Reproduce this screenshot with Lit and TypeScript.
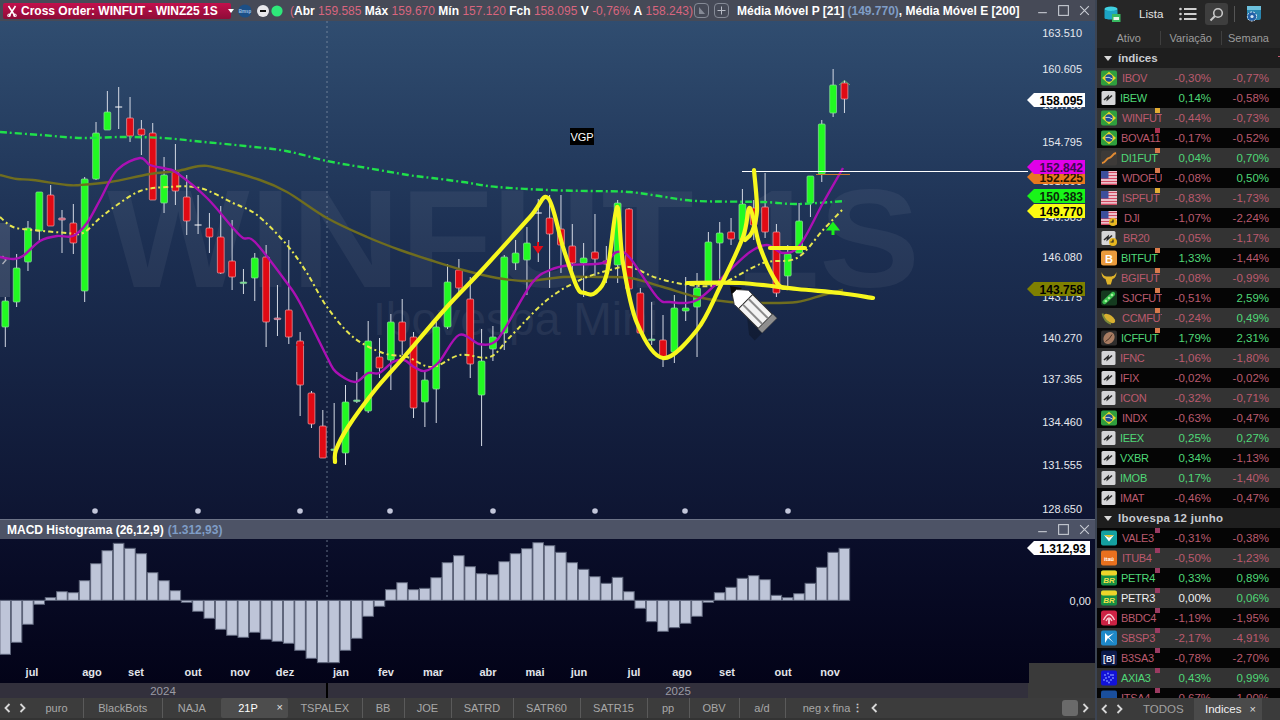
import { LitElement, html, css, svg } from "lit";
import { customElement } from "lit/decorators.js";

type P = [number, number];
const cx = (i: number) => 5.3 + 11.34 * i;

// wickTop, wickBottom, bodyTop, bodyBottom, colour
const candles: [number, number, number, number, string][] = [
  [297,347,301,327,"g"],[254,307,268,302,"g"],[221,271,228,262,"g"],[192,242,192,231,"g"],[185,226,195,226,"r"],
  [210,253,218,220,"p"],[204,254,223,243,"r"],[177,302,179,291,"g"],[122,180,133,179,"g"],[91,130,112,130,"g"],
  [87,129,107,107,"w"],[97,142,118,136,"r"],[120,155,129,135,"r"],[123,200,133,200,"r"],[157,213,175,203,"g"],
  [144,205,172,191,"r"],[175,235,197,221,"r"],[195,234,225,225,"w"],[213,253,228,237,"r"],[206,274,237,273,"r"],
  [220,290,261,277,"r"],[269,294,282,283,"d"],[253,301,258,278,"g"],[245,347,257,322,"r"],[285,336,318,319,"p"],
  [240,344,310,337,"r"],[332,416,341,385,"r"],[391,428,393,424,"r"],[410,458,426,458,"r"],[403,463,449,450,"d"],
  [385,465,402,453,"g"],[372,403,400,401,"d"],[321,413,341,411,"g"],[338,378,357,368,"r"],[314,390,322,360,"g"],
  [299,355,322,341,"r"],[332,418,337,408,"r"],[372,427,380,402,"g"],[322,423,327,389,"g"],[264,329,282,327,"g"],
  [259,293,270,288,"r"],[277,378,299,364,"r"],[329,446,361,395,"g"],[326,361,337,349,"g"],[255,350,257,333,"g"],
  [240,270,253,263,"g"],[227,295,243,260,"g"],[199,262,213,213,"w"],[195,288,218,234,"r"],[195,273,229,245,"r"],
  [224,270,246,263,"r"],[243,297,258,263,"g"],[214,278,252,259,"r"],[246,283,261,264,"r"],[200,283,203,265,"g"],
  [208,289,209,289,"r"],[288,333,293,333,"r"],[302,345,339,340,"d"],[315,367,340,358,"r"],[295,363,308,352,"g"],
  [277,321,308,311,"g"],[273,357,288,307,"g"],[232,285,242,285,"g"],[222,283,233,243,"g"],[218,245,232,239,"r"],
  [189,240,204,240,"g"],[200,240,208,225,"r"],[173,238,207,232,"r"],[224,297,232,293,"r"],[245,290,254,276,"g"],
  [203,253,221,253,"g"],[176,217,176,203,"g"],[120,182,124,174,"g"],[69,117,85,113,"g"],[80,113,83,99,"r"],
];

const macd = [418,382,328,268,248,230,233,197,146,107,85,100,116,173,197,227,262,289,310,343,361,367,352,373,379,385,406,430,443,443,406,370,304,274,224,203,224,220,188,143,122,155,176,179,140,116,101,83,92,112,143,163,185,205,187,230,280,320,349,338,325,304,262,233,217,190,182,194,241,248,236,205,157,112,100];

const green: P[] = [[0,132],[41,135],[82,138],[122,137],[163,138],[204,142],[245,146],[286,151],[327,161],[367,168],[408,175],[432,178],[463,182],[497,187],[548,190],[590,191],[630,192],[665,197],[697,201],[763,202],[797,204],[845,201]];
const olive: P[] = [[0,175],[17,179],[33,180],[67,185],[80,185],[110,182],[150,174],[177,171],[200,166],[217,168],[260,180],[287,192],[327,218],[367,237],[400,250],[430,260],[463,270],[497,278],[527,281],[563,277],[597,277],[630,278],[663,287],[697,297],[730,302],[763,303],[797,302],[823,295],[843,290]];
const yellowDash: P[] = [[0,217],[13,227],[33,230],[67,233],[83,233],[100,218],[117,205],[140,191],[167,187],[200,188],[233,203],[257,215],[287,245],[307,273],[327,307],[353,337],[383,353],[407,357],[432,367],[460,355],[490,357],[510,337],[547,300],[580,280],[610,270],[630,267],[657,278],[690,285],[720,284],[763,263],[797,258],[823,230],[843,209]];
const magenta: P[] = [[0,257],[13,259],[23,256],[40,241],[57,236],[73,236],[87,223],[100,200],[117,170],[140,158],[150,165],[167,169],[177,173],[207,198],[233,228],[243,238],[255,242],[287,283],[300,303],[327,357],[336,372],[355,382],[368,373],[379,373],[393,362],[404,360],[414,367],[425,371],[439,362],[459,335],[479,344],[493,343],[504,330],[532,283],[550,270],[570,265],[603,263],[617,252],[630,258],[657,297],[670,302],[697,300],[730,270],[750,252],[767,245],[783,253],[800,245],[823,203],[843,168]];
const drawA: P[] = [[335,462],[336,450],[348,427],[375,390],[404,357],[446,308],[482,270],[530,217],[548,198],[563,247],[577,287],[585,293],[595,293],[607,273],[617,207],[623,263],[637,323],[663,358],[697,330],[720,287],[743,237],[750,208],[760,247],[777,283],[787,288]];
const drawB: P[] = [[687,283],[740,283],[797,289],[840,293],[873,298]];
const drawD: P[] = [[754,170],[757,210],[752,232],[745,240]];

function smooth(p: P[]) {
  let d = `M${p[0][0]} ${p[0][1]}`;
  for (let i = 0; i < p.length - 1; i++) {
    const a = p[Math.max(i - 1, 0)], b = p[i], c = p[i + 1], e = p[Math.min(i + 2, p.length - 1)];
    const c1x = b[0] + (c[0] - a[0]) / 6, c1y = b[1] + (c[1] - a[1]) / 6;
    const c2x = c[0] - (e[0] - b[0]) / 6, c2y = c[1] - (e[1] - b[1]) / 6;
    d += `C${c1x.toFixed(1)} ${c1y.toFixed(1)} ${c2x.toFixed(1)} ${c2y.toFixed(1)} ${c[0]} ${c[1]}`;
  }
  return d;
}

const axis: [string, number][] = [["163.510",33],["160.605",69],["157.700",105],["154.795",142],["151.890",181],["148.985",217],["146.080",257],["143.175",297],["140.270",338],["137.365",379],["134.460",422],["131.555",465],["128.650",509]];
const tags: [string, number, string, string][] = [["158.095",100,"#ffffff","#000"],["152.225",177,"#e8781e","#2a1500"],["152.842",167,"#e000e8","#3a0a50"],["150.383",196,"#19f519","#0a2a0a"],["149.770",211,"#fbfb12","#000"],["143.758",289,"#7f8000","#000"]];
const months: [string, number][] = [["jul",32],["ago",92],["set",136],["out",193],["nov",240],["dez",285],["jan",341],["fev",386],["mar",433],["abr",488],["mai",535],["jun",579],["jul",634],["ago",682],["set",727],["out",783],["nov",830]];
const dots = [95,198,300,390,493,595,685,788];

const tabs: [string, number][] = [["puro",54],["BlackBots",78.5],["NAJA",58.5],["21P",67],["TSPALEX",74.5],["BB",42],["JOE",47],["SATRD",62],["SATR60",67],["SATR15",67],["pp",42],["OBV",50],["a/d",46]];

// ticker, variation, week, icon, marker, indent
type Row = [string, string, string, string, string?, number?];
const sec1: Row[] = [
  ["IBOV","-0,30%","-0,77%","br",undefined,4],["IBEW","0,14%","-0,58%","idx",undefined,2],["WINFUT","-0,44%","-0,73%","br","#e4ad32",4],
  ["BOVA11","-0,17%","-0,52%","br","#a8304e",3],["DI1FUT","0,04%","0,70%","curve","#d9794a",3],["WDOFUT","-0,08%","0,50%","us","#d9794a",4],
  ["ISPFUT","-0,83%","-1,73%","us","#e4ad32",4],["DJI","-1,07%","-2,24%","usc",undefined,6],["BR20","-0,05%","-1,17%","idxc",undefined,5],
  ["BITFUT","1,33%","-1,44%","btc","#d9794a",3],["BGIFUT","-0,08%","-0,99%","bull","#d9794a",3],["SJCFUT","-0,51%","2,59%","soy","#d9794a",4],
  ["CCMFUT","-0,24%","0,49%","corn","#d9794a",4],["ICFFUT","1,79%","2,31%","coffee","#d9794a",3],["IFNC","-1,06%","-1,80%","idx",undefined,2],
  ["IFIX","-0,02%","-0,02%","idx",undefined,2],["ICON","-0,32%","-0,71%","idx",undefined,2],["INDX","-0,63%","-0,47%","br",undefined,4],
  ["IEEX","0,25%","0,27%","idx",undefined,2],["VXBR","0,34%","-1,13%","idx",undefined,2],["IMOB","0,17%","-1,40%","idx",undefined,2],["IMAT","-0,46%","-0,47%","idx",undefined,2],
];
const sec2: Row[] = [
  ["VALE3","-0,31%","-0,38%","vale","#9a3a60",4],["ITUB4","-0,50%","-1,23%","itau","#9a3a60",4],["PETR4","0,33%","0,89%","petro","#9a3a60",3],
  ["PETR3","0,00%","0,06%","petro","#9a3a60",3],["BBDC4","-1,19%","-1,95%","brad","#9a3a60",3],["SBSP3","-2,17%","-4,91%","sabesp","#9a3a60",3],
  ["B3SA3","-0,78%","-2,70%","b3","#9a3a60",3],["AXIA3","0,43%","0,99%","axia","#9a3a60",3],["ITSA4","-0,67%","-1,00%","itsa","#9a3a60",3],
];

const clock = svg`<circle cx="12" cy="12" r="4" fill="#e8b820"/><path d="M12 9.5V12H9.5" stroke="#222" stroke-width="1.2" fill="none"/>`;
const idxBase = svg`<rect width="14" height="14" x="0.5" y="1" rx="1.5" fill="#d6d6d8"/><path d="M3 10 7 6.5 6.5 9.5 11 5.5" stroke="#2b2b2b" stroke-width="1.6" fill="none"/>`;
const usBase = svg`<rect y="1" width="16" height="14" fill="#f4e8ee"/><path d="M0 2.5H16M0 5.5H16M0 8.5H16M0 11.5H16M0 14.2H16" stroke="#d24a62" stroke-width="1.4"/><rect y="1" width="7.5" height="7.5" fill="#3c4f9c"/>`;

function icon(kind: string) {
  let c;
  switch (kind) {
    case "br": c = svg`<rect y="0.5" width="16" height="15" rx="2" fill="#2f9e3e"/><path d="M8 1.8 15 8 8 14.2 1 8Z" fill="#e6d92b"/><circle cx="8" cy="8" r="3.7" fill="#1c4d94"/><path d="M4.5 7.5Q8 6.5 11.5 9" stroke="#eee" stroke-width=".8" fill="none"/>`; break;
    case "idx": c = idxBase; break;
    case "idxc": c = svg`${idxBase}${clock}`; break;
    case "us": c = usBase; break;
    case "usc": c = svg`${usBase}${clock}`; break;
    case "curve": c = svg`<rect y="0.5" width="16" height="15" rx="2" fill="#3d3a38"/><path d="M1 13C5 13 5 8 8 8S11 4 15 3" stroke="#e08a32" stroke-width="2" fill="none"/>`; break;
    case "btc": c = svg`<rect y="0.5" width="16" height="15" rx="2.5" fill="#ea9a3c"/><text x="8" y="12.5" class="ig" font-size="11" fill="#fff">B</text>`; break;
    case "bull": c = svg`<path d="M0.5 2C2 6 4 6 5.5 6.5H10.5C12 6 14 6 15.5 2 15.5 6 14 8.5 11.5 9L9.8 14.5H6.2L4.5 9C2 8.5 .5 6 .5 2Z" fill="#e0b32a"/>`; break;
    case "soy": c = svg`<rect y="0.5" width="16" height="15" rx="2" fill="#153a1f"/><path d="M3.5 12 12 4" stroke="#38c24c" stroke-width="4.4" stroke-linecap="round"/><circle cx="4.8" cy="11" r="1.3" fill="#a6f0a0"/><circle cx="8" cy="8" r="1.3" fill="#a6f0a0"/><circle cx="11" cy="5" r="1.3" fill="#a6f0a0"/>`; break;
    case "corn": c = svg`<ellipse cx="8.5" cy="8.5" rx="6.5" ry="3.4" transform="rotate(35 8.5 8.5)" fill="#d8b030"/><path d="M1.5 3.5Q3 11 10 14" stroke="#7a8a3a" stroke-width="1.8" fill="none"/>`; break;
    case "coffee": c = svg`<rect y="0.5" width="16" height="15" rx="2" fill="#2f2d2c"/><ellipse cx="8" cy="8" rx="5.2" ry="6.4" transform="rotate(35 8 8)" fill="#a87c62"/><path d="M4.5 11.5Q9 9 11 4.5" stroke="#4a3022" stroke-width="1" fill="none"/>`; break;
    case "vale": c = svg`<rect y="0.5" width="16" height="15" rx="2" fill="#14a0a0"/><path d="M3 5 8 11.5 13 5 8 7.5Z" fill="#fff"/><path d="M3 5 8 7.5 13 5H3Z" fill="#e8c430"/>`; break;
    case "itau": c = svg`<rect y="0.5" width="16" height="15" rx="2" fill="#e8701e"/><text x="8" y="10.5" class="ig" font-size="5.6" fill="#fff">itaú</text>`; break;
    case "petro": c = svg`<rect y="0.5" width="16" height="15" rx="2" fill="#168f45"/><rect y="0.5" width="16" height="5" rx="2" fill="#eed52a"/><text x="8" y="13" class="ig it" font-size="8" fill="#f0e24a">BR</text>`; break;
    case "brad": c = svg`<rect y="0.5" width="16" height="15" rx="2.5" fill="#cc2244"/><path d="M2.5 10Q8 -1 13.5 10M5 11Q8 5 11 11" stroke="#f5c8d0" stroke-width="1.3" fill="none"/><path d="M8 9V14" stroke="#fff" stroke-width="1.4"/>`; break;
    case "sabesp": c = svg`<rect y="0.5" width="16" height="15" rx="2" fill="#1e88c8"/><path d="M4 3V13L7 8 13 13 8 7.5 13 3 7 6Z" fill="#fff"/>`; break;
    case "b3": c = svg`<rect y="0.5" width="16" height="15" rx="2" fill="#0d1a4a"/><text x="8" y="11.5" class="ig" font-size="8.5" fill="#e8e8f4">[B]</text>`; break;
    case "axia": c = svg`<rect y="0.5" width="16" height="15" rx="2" fill="#1212d8"/>${[[4,5],[7,3.5],[10,5],[12,8],[5,8],[8,7],[10,10],[6,11],[8,12.5],[3,10],[12,5]].map(p => svg`<circle cx=${p[0]} cy=${p[1]} r=".9" fill="#7a8aff"/>`)}`; break;
    default: c = svg`<rect y="0.5" width="16" height="15" rx="2" fill="#1a4f9c"/>`;
  }
  return html`<svg class="ico" viewBox="0 0 16 16">${c}</svg>`;
}

const winCtl = html`<div class="winctl">
  <svg viewBox="0 0 12 12"><path d="M2 8H10" /></svg>
  <svg viewBox="0 0 12 12"><rect x="1.5" y="1.5" width="9" height="9" /></svg>
  <svg viewBox="0 0 12 12"><path d="M2 2 10 10M10 2 2 10" /></svg>
</div>`;

@customElement("app-root")
export class AppRoot extends LitElement {
  static styles = css`
    :host { display: flex; width: 1280px; height: 720px; overflow: hidden; background: #222; font-family: "Liberation Sans", Arial, sans-serif; }
    .left { width: 1095px; display: flex; flex-direction: column; flex: none; }
    .gap { width: 2px; background: #3c4452; flex: none; }
    .right { width: 183px; flex: none; display: flex; flex-direction: column; background: #1e1e1e; overflow: hidden; }

    .title { height: 21px; flex: none; background: #464a57; display: flex; align-items: center; color: #fff; font-size: 12px; font-weight: 700; white-space: nowrap; }
    .cross { margin-left: 3px; width: 228px; height: 16px; border-radius: 2px; background: linear-gradient(#c2104c, #8e0c38); display: flex; align-items: center; gap: 4px; padding-left: 4px; box-sizing: border-box; flex: none; }
    .cross svg { width: 10px; height: 12px; flex: none; }
    .caret { margin-left: 6px; width: 0; height: 0; border: 3.5px solid transparent; border-top: 4px solid #fff; border-bottom: 0; }
    .bulbs { display: flex; align-items: center; margin-left: 7px; width: 52px; flex: none; }
    .bulbs svg { width: 14px; height: 14px; flex: none; }
    .bulb2 { margin-left: 4px; }
    .bulbs .bulb3 { margin-left: 0; }
    .bmsp { font-size: 4.5px; font-weight: 700; fill: #9cc0e4; text-anchor: middle; font-family: "Liberation Sans", sans-serif; }
    .quote { display: flex; gap: 3.4px; flex: none; width: 404px; font-size: 12px; }
    .quote .v { color: #d8657e; font-weight: 400; }
    .quote .paren { margin-left: -3.4px; }
    .tbtn { width: 15px; height: 15px; border: 1px solid #858a96; border-radius: 4px; box-sizing: border-box; margin-right: 5px; flex: none; display: flex; align-items: center; justify-content: center; }
    .tbtn svg { width: 9px; height: 9px; }
    .mm { margin-left: 3px; flex: none; width: 292px; font-size: 12px; }
    .mm span { color: #7f9dc6; }
    .winctl { display: flex; gap: 8px; margin-left: auto; margin-right: 4px; flex: none; }
    .winctl svg { width: 13px; height: 13px; fill: none; stroke: #c8ccd4; stroke-width: 1; }

    .pane { display: block; width: 1095px; flex: none; }
    .main { height: 498px; }
    .macdhead { height: 20px; flex: none; background: #4d5366; border-top: 1px solid #6c7387; box-sizing: border-box; display: flex; align-items: center; padding-left: 7px; color: #fff; font-size: 12px; font-weight: 700; white-space: nowrap; }
    .macdhead span { color: #7f9dc6; margin-left: 4px; }
    .macd { height: 144px; }
    .years { height: 15px; flex: none; display: flex; background: #3a3a3a; }
    .yr { background: #32303c; color: #9a9aa4; font-size: 11.5px; display: flex; align-items: center; justify-content: center; }
    .y1 { width: 326px; border-right: 2px solid #000; }
    .y2 { width: 700px; }
    .tabs { flex: 1; background: #3c3c3c; display: flex; align-items: stretch; color: #a8a8a8; font-size: 11px; border-bottom: 2px solid #333; }
    .arrows { width: 30px; flex: none; display: flex; justify-content: center; align-items: center; gap: 6px; }
    .arrows svg { width: 9px; height: 10px; fill: none; stroke: #d8d8d8; stroke-width: 1.8; }
    .tab { position: relative; display: flex; align-items: center; justify-content: center; box-sizing: border-box; border-right: 1px solid #5a5a5a; flex: none; margin: 0; }
    .tab.before { border-right: none; }
    .tab.active { background: #4d4d4d; color: #fff; border-right: none; padding-right: 13px; border-radius: 2px; }
    .tab.active i { position: absolute; right: 5px; top: 3px; font-style: normal; font-size: 11px; color: #e0e0e0; }
    .negx { width: 65px; flex: none; text-align: center; align-self: center; padding-left: 17px; box-sizing: border-box; white-space: nowrap; }
    .vdots { width: 14px; text-align: center; align-self: center; color: #ccc; font-weight: 700; flex: none; }
    .lastnav { width: 14px; margin-left: 3px; flex: none; display: flex; align-items: center; justify-content: center; }
    .lastnav svg, .endnav svg { width: 9px; height: 10px; fill: none; stroke: #d8d8d8; stroke-width: 1.8; }
    .endnav { margin-left: auto; display: flex; align-items: center; margin-right: 5px; }
    .thumb { width: 16px; height: 16px; border-radius: 3px; background: #6a6a6a; margin-right: 3px; }

    .toolbar { height: 28px; flex: none; background: #262626; display: flex; align-items: center; color: #e4e4e4; font-size: 11.5px; }
    .toolbar svg { flex: none; }
    .dbi { width: 18px; height: 18px; margin-left: 6px; }
    .lista { margin-left: 18px; width: 40px; }
    .listi { width: 18px; height: 14px; }
    .search { width: 23px; height: 22px; border-radius: 3px; background: #3e3e3e; margin-left: 8px; display: flex; align-items: center; justify-content: center; }
    .search svg { width: 15px; height: 15px; }
    .vbar { width: 1px; height: 16px; background: #555; margin-left: 6px; }
    .geari { width: 18px; height: 18px; margin-left: 10px; }
    .colhead { height: 20px; flex: none; background: #262626; display: grid; grid-template-columns: 64px 61px 47px; align-items: center; color: #9c9c9c; font-size: 11px; }
    .colhead div { text-align: right; white-space: nowrap; height: 14px; line-height: 14px; border-right: 1px solid #3f3f3f; box-sizing: border-box; padding-right: 19px; }
    .colhead .c2 { padding-right: 9px; }
    .colhead .c3 { border: none; padding-right: 0; }
    .list { height: 650px; flex: none; overflow: hidden; }
    .sec { height: 20px; background: #1e1e1e; color: #c9ccd2; font-weight: 700; font-size: 11.5px; display: flex; align-items: center; padding-left: 7px; gap: 6px; position: relative; }
    .sec::before { content: ""; width: 0; height: 0; border: 4px solid transparent; border-top: 5px solid #d8d8d8; border-bottom: 0; }
    .sec.wide { letter-spacing: .3px; }
    .sec i { position: absolute; right: 0; top: 8px; width: 2px; height: 1px; background: #c05a6e; }
    .row { position: relative; height: 20px; display: grid; grid-template-columns: 20px 44px 49px 58px; align-items: center; padding-left: 1px; font-size: 11.5px; background: #050505; }
    .row.alt { background: #333333; }
    .ico { width: 16px; height: 16px; display: block; margin-left: 3px; }
    .ig { font-family: "Liberation Sans", sans-serif; font-weight: 700; text-anchor: middle; }
    .it { font-style: italic; }
    .tk { overflow: hidden; white-space: clip; font-size: 11px; letter-spacing: -.3px; }
    .n { text-align: right; }
    .up { color: #4fd877; }
    .dn { color: #bb5a6e; }
    .flat { color: #f0f0f0; }
    .mark { position: absolute; left: 58px; top: 0; width: 5px; height: 5px; }
    .rtabs { flex: 1; background: #3b3b3b; display: flex; align-items: stretch; font-size: 11.5px; color: #a0a0a0; }
    .rtabs .arrows { width: 30px; margin-right: 16px; }
    .rtabs .todos { display: flex; align-items: center; width: 51px; }
    .itab { width: 68px; background: #4a4a4a; color: #f0f0f0; display: flex; align-items: center; padding-left: 11px; box-sizing: border-box; gap: 8px; }
    .itab i { font-style: normal; font-size: 11px; color: #ddd; }

    svg text.ax { font-size: 11px; fill: #e6e8ee; font-family: "Liberation Sans", sans-serif; text-anchor: end; }
    svg text.tg { font-size: 12px; font-weight: 700; font-family: "Liberation Sans", sans-serif; text-anchor: end; }
    svg text.mo { font-size: 11px; fill: #e2e4ea; font-family: "Liberation Sans", sans-serif; text-anchor: middle; font-weight: 700; }
    svg text.wm { font-family: "Liberation Sans", sans-serif; fill: #fff; }
    svg text.vgp { font-size: 11px; fill: #fff; font-family: "Liberation Sans", sans-serif; text-anchor: middle; }
  `;

  private chart() {
    const bodyCol: Record<string, [string, string]> = { g: ["#22fa22", "#8fe0a0"], r: ["#e00a14", "#f0a4a8"], p: ["#c8506a", "#eeb8c4"], d: ["#6fe08a", "#8fd0a0"], w: ["#fff", "#fff"] };
    return html`<svg class="pane main" viewBox="0 21 1095 498">
      <defs>
        <linearGradient id="bg" x1="0" y1="0" x2="0" y2="1"><stop offset="0" stop-color="#304d70"/><stop offset=".45" stop-color="#1c2f52"/><stop offset="1" stop-color="#0e1532"/></linearGradient>
      </defs>
      <rect x="0" y="21" width="1095" height="498" fill="url(#bg)"/>
      <text class="wm" x="107" y="287" font-size="140" font-weight="700" textLength="813" lengthAdjust="spacingAndGlyphs" opacity=".05">WINFUT 1S</text>
      <text class="wm" x="373" y="335" font-size="46" textLength="285" lengthAdjust="spacingAndGlyphs" opacity=".06">Ibovespa Mini</text>
      <rect x="0" y="223" width="10" height="74" fill="#fff" opacity=".13"/>
      <path d="M2.5 256 6 260 2.5 264" stroke="#aeb2bc" stroke-width="1.3" fill="none"/>
      <path d="M327 21V519" stroke="#8a99ad" stroke-width="1" stroke-dasharray="2 3" opacity=".7"/>
      ${candles.map((c, i) => {
        const x = cx(i), [wt, wb, bt, bb, k] = c, col = bodyCol[k];
        return svg`<path d="M${x} ${wt}V${wb}" stroke="#d4d9e4" stroke-width="1"/>
        ${k === "w" ? svg`<path d="M${x - 3.5} ${bt}H${x + 3.5}" stroke="#fff" stroke-width="1"/>`
          : svg`<rect x=${x - 3.4} y=${bt} width="6.8" height=${Math.max(bb - bt, 1.6)} rx="1" fill=${col[0]} stroke=${col[1]} stroke-width=".7"/>`}`;
      })}
      <path d=${smooth(olive)} stroke="#6f6d1f" stroke-width="2.4" fill="none"/>
      <path d=${smooth(green)} stroke="#1fe04a" stroke-width="2.4" fill="none" stroke-dasharray="7 3 2 3"/>
      <path d=${smooth(yellowDash)} stroke="#e6e650" stroke-width="2" fill="none" stroke-dasharray="5 3 2 3"/>
      <path d=${smooth(magenta)} stroke="#ab10b4" stroke-width="2.4" fill="none"/>
      <path d="M538 242V249M534.5 247 538 252 541.5 247Z" stroke="#e00c18" stroke-width="2" fill="#e00c18"/>
      <path d="M833 235V229M829 229 833 224 837 229Z" stroke="#1cf01c" stroke-width="3" fill="#1cf01c"/>
      <path d="M839 85 844.5 80.5 850 85" stroke="#62b060" fill="none"/>
      <path d="M296 345H304" stroke="#e00c18" stroke-width="1.5"/>
      <path d="M742 171.5H1028" stroke="#fff" stroke-width="1.2"/>
      <path d="M816 174.5H850" stroke="#c87830" stroke-width="1"/>
      <g fill="none" stroke="#f7f71e" stroke-linecap="round" stroke-linejoin="round" stroke-width="4.2">
        <path d=${smooth(drawA)}/>
        <path d=${smooth(drawB)}/>
        <path d=${smooth(drawD)}/>
        <path d="M770 248H805"/>
      </g>
      <g transform="translate(730 286) rotate(45)">
        <path d="M2 2 16 -8H24V13H16Z" fill="#000" opacity=".25" transform="translate(32 8)"/>
        <path d="M0 0 10 -7 10 7Z" fill="#080808"/>
        <path d="M7 -2 16 -10H22V10H16L7 4Z" fill="#fff" stroke="#2a2a2a" stroke-width=".8"/>
        <rect x="22" y="-10" width="28" height="20" fill="#f4f4f4" stroke="#333" stroke-width="1"/>
        <path d="M22 -4H50M22 4H50" stroke="#8a8a8a" stroke-width="2"/>
        <rect x="50" y="-10.5" width="6" height="21" fill="#8e8e8e" stroke="#444" stroke-width=".6"/>
      </g>
      <rect x="570" y="128" width="24" height="17" fill="#000"/>
      <text class="vgp" x="582" y="141">VGP</text>
      ${axis.map(a => svg`<text class="ax" x="1082" y=${a[1] + 4}>${a[0]}</text>`)}
      ${tags.map(t => svg`<path d="M1027 ${t[1]} 1034 ${t[1] - 7}H1085V${t[1] + 7}H1034Z" fill=${t[2]}/>
        <text class="tg" x="1083" y=${t[1] + 4.5} fill=${t[3]}>${t[0]}</text>`)}
      ${dots.map(x => svg`<circle cx=${x} cy="511" r="2.8" fill="#c2c6da"/>`)}
    </svg>`;
  }

  private macdChart() {
    const base = 515 + 256 / 3;
    return html`<svg class="pane macd" viewBox="0 539 1095 144">
      <defs><linearGradient id="mg" x1="0" y1="0" x2="0" y2="1"><stop offset="0" stop-color="#0a0e2a"/><stop offset="1" stop-color="#030318"/></linearGradient></defs>
      <rect x="0" y="539" width="1095" height="144" fill="url(#mg)"/>
      <path d="M327 540V600" stroke="#8a99ad" stroke-dasharray="2 3" opacity=".7"/>
      ${macd.map((v, i) => {
        const y = 515 + v / 3, t = Math.min(y, base), h = Math.abs(y - base), x = cx(i);
        return svg`<rect x=${x - 5.4} y=${t} width="10.6" height=${Math.max(h, .8)} fill="#bec5d8" stroke="#5c6378" stroke-width="1"/>`;
      })}
      ${months.map(m => svg`<text class="mo" x=${m[1]} y="676">${m[0]}</text>`)}
      <path d="M1027 548 1034 541H1090V555H1034Z" fill="#fff"/>
      <text class="tg" x="1086" y="552.5" fill="#000">1.312,93</text>
      <text class="ax" x="1091" y="605">0,00</text>
      <rect x="1029" y="663" width="66" height="20" fill="#3a3a3a"/>
    </svg>`;
  }

  private rowTpl(r: Row, alt: boolean) {
    const cls = (s: string) => (s.startsWith("-") ? "dn" : s === "0,00%" ? "flat" : "up");
    const tkCls = r[0] === "PETR3" ? "flat" : cls(r[1]);
    return html`<div class="row ${alt ? "alt" : ""}">
      ${icon(r[3])}
      <div class="tk ${tkCls}" style="padding-left:${r[5] ?? 3}px">${r[0]}</div>
      <div class="n ${cls(r[1])}">${r[1]}</div>
      <div class="n ${cls(r[2])}">${r[2]}</div>
      ${r[4] ? html`<div class="mark" style="background:${r[4]}"></div>` : ""}
    </div>`;
  }

  render() {
    const chevL = html`<svg viewBox="0 0 9 10"><path d="M6.5 1 2.5 5 6.5 9"/></svg>`;
    const chevR = html`<svg viewBox="0 0 9 10"><path d="M2.5 1 6.5 5 2.5 9"/></svg>`;
    return html`
      <div class="left">
        <div class="title">
          <div class="cross">
            <svg viewBox="0 0 10 12"><path d="M1.5 1 8 11M8.5 1 2 11" stroke="#fff" stroke-width="1.6"/><circle cx="2" cy="10.5" r="1.4" fill="none" stroke="#fff"/><circle cx="8" cy="10.5" r="1.4" fill="none" stroke="#fff"/></svg>
            <span>Cross Order: WINFUT - WINZ25 1S</span><div class="caret"></div>
          </div>
          <div class="bulbs">
            <svg viewBox="0 0 14 14"><circle cx="7" cy="7" r="6.6" fill="#1c4f86"/><text class="bmsp" x="7" y="8.5">Bmsp</text></svg>
            <svg class="bulb2" viewBox="0 0 14 14"><circle cx="7" cy="7" r="6" fill="#e8e8ec"/><path d="M4 7H10" stroke="#111" stroke-width="2"/></svg>
            <svg class="bulb3" viewBox="0 0 14 14"><circle cx="7" cy="7" r="5.6" fill="#2ee87a"/></svg>
          </div>
          <div class="quote">
            <span class="v">(</span><span class="paren">Abr</span><span class="v">159.585</span><span>Máx</span><span class="v">159.670</span><span>Mín</span><span class="v">157.120</span><span>Fch</span><span class="v">158.095</span><span>V</span><span class="v">-0,76%</span><span>A</span><span class="v">158.243)</span>
          </div>
          <div class="tbtn"><svg viewBox="0 0 9 9"><path d="M2 1V8L8 8Z" fill="#858a96"/></svg></div>
          <div class="tbtn"><svg viewBox="0 0 9 9"><path d="M4.5 .5V8.5M.5 4.5H8.5" stroke="#b8bcc6" stroke-width="1"/></svg></div>
          <div class="mm">Média Móvel P [21] <span>(149.770)</span>, Média Móvel E [200]</div>
          ${winCtl}
        </div>
        ${this.chart()}
        <div class="macdhead">MACD Histograma (26,12,9)<span>(1.312,93)</span>${winCtl}</div>
        ${this.macdChart()}
        <div class="years"><div class="yr y1">2024</div><div class="yr y2">2025</div></div>
        <div class="tabs">
          <div class="arrows">${chevL}${chevR}</div>
          ${tabs.map(t => t[0] === "21P"
            ? html`<div class="tab active" style="width:${t[1]}px">21P<i>×</i></div>`
            : html`<div class="tab ${t[0] === "NAJA" ? "before" : ""}" style="width:${t[1]}px">${t[0]}</div>`)}
          <div class="negx">neg x fina</div>
          <div class="vdots">⋮</div>
          <div class="lastnav">${chevL}</div>
          <div class="endnav"><div class="thumb"></div>${chevR}</div>
        </div>
      </div>
      <div class="gap"></div>
      <div class="right">
        <div class="toolbar">
          <svg class="dbi" viewBox="0 0 18 18"><ellipse cx="8" cy="4" rx="6.5" ry="2.6" fill="#3fd0e0"/><path d="M1.5 4V13C1.5 15 14.5 15 14.5 13V4C14.5 6.5 1.5 6.5 1.5 4Z" fill="#1ca4c4"/><rect x="9" y="9" width="8.5" height="8" fill="#38b860"/><rect x="10.5" y="12" width="5.5" height="3" fill="#e8f4e8"/></svg>
          <div class="lista">Lista</div>
          <svg class="listi" viewBox="0 0 18 14"><g fill="#cfcfcf"><circle cx="1.5" cy="2" r="1.3"/><circle cx="1.5" cy="7" r="1.3"/><circle cx="1.5" cy="12" r="1.3"/><rect x="5" y="1" width="12.5" height="2"/><rect x="5" y="6" width="12.5" height="2"/><rect x="5" y="11" width="12.5" height="2"/></g></svg>
          <div class="search"><svg viewBox="0 0 15 15"><circle cx="9" cy="6" r="4.3" fill="none" stroke="#c8c8c8" stroke-width="1.6"/><path d="M6 9 1.5 13.5" stroke="#c8c8c8" stroke-width="2"/></svg></div>
          <div class="vbar"></div>
          <svg class="geari" viewBox="0 0 18 18"><rect x="2" y="1" width="14" height="14" rx="2" fill="#2a86b0"/><rect x="2" y="1" width="14" height="4" fill="#6cc0dc"/><circle cx="7" cy="11.5" r="4.6" fill="#2460a8" stroke="#d8e8f4" stroke-width="1" stroke-dasharray="2 1.2"/><circle cx="7" cy="11.5" r="1.6" fill="#d8e8f4"/></svg>
        </div>
        <div class="colhead"><div>Ativo</div><div class="c2">Variação</div><div class="c3">Semana</div></div>
        <div class="list">
          <div class="sec">índices<i></i></div>
          ${sec1.map((r, i) => this.rowTpl(r, i % 2 === 0))}
          <div class="sec wide">Ibovespa 12 junho</div>
          ${sec2.map((r, i) => this.rowTpl(r, i % 2 === 1))}
        </div>
        <div class="rtabs">
          <div class="arrows">${chevL}${chevR}</div>
          <div class="todos">TODOS</div>
          <div class="itab">Indices<i>×</i></div>
        </div>
      </div>
    `;
  }
}
